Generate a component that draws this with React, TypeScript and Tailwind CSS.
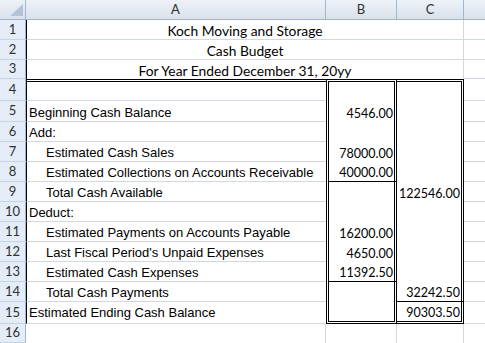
const calibri = "font-['Lato','Open_Sans',sans-serif]";
const arial = "font-['Liberation_Sans','Arial',sans-serif]";

type Row = {
  n: number;
  label?: string;
  indent?: boolean;
  b?: string;
  c?: string;
  bLine?: boolean;
  cLine?: boolean;
};

const rows: Row[] = [
  { n: 4 },
  { n: 5, label: 'Beginning Cash Balance', b: '4546.00' },
  { n: 6, label: 'Add:' },
  { n: 7, label: 'Estimated Cash Sales', indent: true, b: '78000.00' },
  { n: 8, label: 'Estimated Collections on Accounts Receivable', indent: true, b: '40000.00', bLine: true },
  { n: 9, label: 'Total Cash Available', indent: true, c: '122546.00' },
  { n: 10, label: 'Deduct:' },
  { n: 11, label: 'Estimated Payments on Accounts Payable', indent: true, b: '16200.00' },
  { n: 12, label: "Last Fiscal Period's Unpaid Expenses", indent: true, b: '4650.00' },
  { n: 13, label: 'Estimated Cash Expenses', indent: true, b: '11392.50', bLine: true },
  { n: 14, label: 'Total Cash Payments', indent: true, c: '32242.50', cLine: true },
  { n: 15, label: 'Estimated Ending Cash Balance', c: '90303.50' },
];

const titles = ['Koch Moving and Storage', 'Cash Budget', 'For Year Ended December 31, 20yy'];

function RowHead({ n }: { n: number }) {
  return (
    <div className={`${calibri} flex items-center justify-center border-r border-b border-r-[#9eb6ce] border-b-[#c5d3e3] bg-[#e4ecf7] text-[13px] text-[#303030]`}>
      {n}
    </div>
  );
}

export default function App() {
  return (
    <div className="h-[343px] w-[485px] overflow-hidden bg-white">
      <div className="grid grid-cols-[26px_300px_71px_67px_1fr] grid-rows-[20px_20px_20px_19px_22px_21px_repeat(9,20px)_22px_19px]">
        {/* column headers */}
        <div className="relative border-r border-b border-[#9eb6ce] bg-linear-to-b from-[#eef2f8] to-[#dae1eb]">
          <svg className="absolute right-[2px] bottom-[3px]" width="13" height="12" viewBox="0 0 13 12">
            <polygon points="0,12 13,12 13,0" fill="#b4c3d7" />
          </svg>
        </div>
        {['A', 'B', 'C'].map((h) => (
          <div
            key={h}
            className={`${calibri} flex items-center justify-center border-r border-b border-[#9eb6ce] bg-linear-to-b from-[#eef2f8] to-[#dae1eb] text-[13px] text-[#303030]`}
          >
            {h}
          </div>
        ))}
        <div className="border-b border-[#9eb6ce] bg-linear-to-b from-[#eef2f8] to-[#dae1eb]" />

        {/* title rows */}
        {titles.map((t, i) => (
          <div key={t} className="contents">
            <RowHead n={i + 1} />
            <div
              className={`${calibri} col-span-3 flex items-end justify-center border-l border-r border-l-black border-r-[#d0d7e5] text-[13.8px] leading-[16px] text-black ${
                i < 2 ? 'border-b border-b-[#d0d7e5]' : ''
              }`}
            >
              {t}
            </div>
            <div className="border-b border-[#d0d7e5]" />
          </div>
        ))}

        {/* body rows */}
        {rows.map((r) => {
          const first = r.n === 4;
          const last = r.n === 15;
          return (
            <div key={r.n} className="contents">
              <RowHead n={r.n} />
              <div
                className={`${arial} flex items-end whitespace-nowrap border-l border-b border-l-black border-b-[#d0d7e5] text-[13px] leading-[16px] text-black ${
                  r.indent ? 'pl-[19px]' : 'pl-[2px]'
                } ${first ? 'border-t-[3px] border-double border-t-black' : ''} ${last ? 'pb-[2px]' : ''}`}
              >
                {r.label}
              </div>
              <div
                className={`${calibri} flex items-end justify-end border-double border-black border-l-[3px] border-r-[3px] pr-[1px] text-[12.5px] leading-[16px] text-black ${
                  first ? 'border-t-[3px]' : ''
                } ${last ? 'border-b-[3px]' : ''} ${r.bLine ? 'border-b' : ''}`}
              >
                {r.b}
              </div>
              <div
                className={`${calibri} flex items-end justify-end border-double border-black border-r-[3px] pr-[1px] text-[12.5px] leading-[16px] text-black ${
                  first ? 'border-t-[3px]' : ''
                } ${last ? 'border-b-[3px]' : ''} ${r.cLine ? 'border-b' : ''}`}
              >
                {r.c}
              </div>
              <div className="border-b border-[#d0d7e5]" />
            </div>
          );
        })}

        {/* row 16 */}
        <RowHead n={16} />
        <div className="border-r border-[#d0d7e5]" />
        <div className="border-r border-[#d0d7e5]" />
        <div className="border-r border-[#d0d7e5]" />
        <div />
      </div>
    </div>
  );
}
